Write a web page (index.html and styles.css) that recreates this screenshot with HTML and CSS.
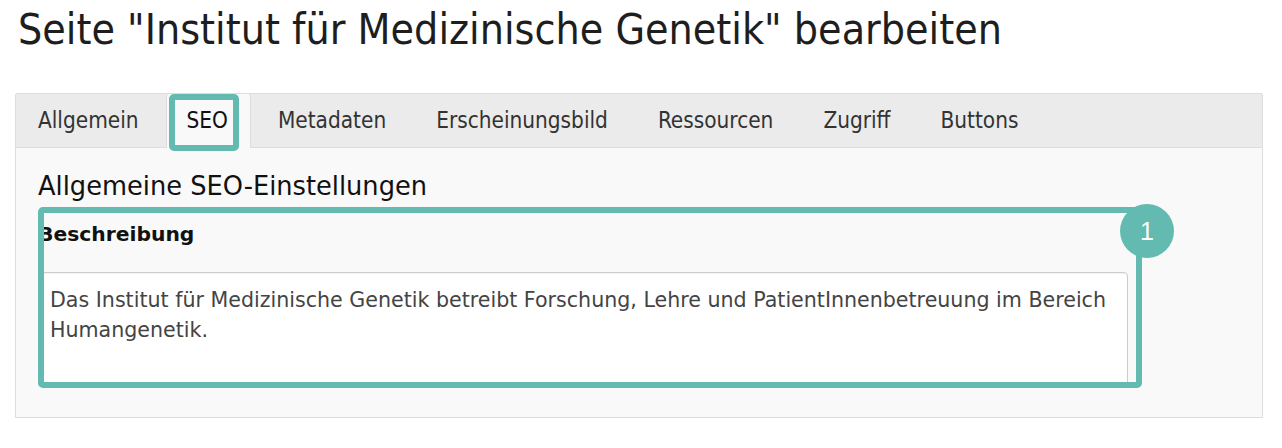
FILE: index.html
```html
<!DOCTYPE html>
<html lang="de">
<head>
    <meta charset="UTF-8">
    <title>Seite bearbeiten</title>
    <link rel="stylesheet" href="styles.css">
</head>
<body>
    <h1 class="page-title">Seite "Institut für Medizinische Genetik" bearbeiten</h1>

    <div class="tabs">
        <div class="tab-bar">
            <div class="tab">Allgemein</div>
            <div class="tab active">SEO<span class="mark mark-tab"></span></div>
            <div class="tab">Metadaten</div>
            <div class="tab">Erscheinungsbild</div>
            <div class="tab">Ressourcen</div>
            <div class="tab">Zugriff</div>
            <div class="tab">Buttons</div>
        </div>

        <div class="tab-panel">
            <h2>Allgemeine SEO-Einstellungen</h2>
            <div class="field">
                <label for="description">Beschreibung</label>
                <textarea id="description" readonly>Das Institut für Medizinische Genetik betreibt Forschung, Lehre und PatientInnenbetreuung im Bereich Humangenetik.</textarea>
                <span class="mark mark-field"></span>
                <span class="badge">1</span>
            </div>
        </div>
    </div>
</body>
</html>
```

FILE: styles.css
```css
body {
    margin: 0;
    font-family: 'DejaVu Sans', sans-serif;
    color: #222;
    background: #ffffff;
}

.page-title {
    font-family: 'DejaVu Sans Condensed', 'DejaVu Sans', sans-serif;
    font-stretch: condensed;
    font-weight: normal;
    font-size: 42.5px;
    line-height: 50px;
    margin: 5px 0 38px 18px;
    color: #1e1e1e;
}

.tabs {
    margin: 0 19px 0 15px;
}

.tab-bar {
    display: flex;
    align-items: flex-end;
    background: #ebebeb;
    border: 1px solid #dddddd;
    border-radius: 2px 2px 0 0;
}

.tab {
    position: relative;
    font-family: 'DejaVu Sans Condensed', 'DejaVu Sans', sans-serif;
    font-stretch: condensed;
    font-size: 22.4px;
    line-height: 22px;
    color: #333;
    padding: 15px 22px 16px;
    margin-right: 4px;
    border: 1px solid transparent;
    border-bottom: none;
    margin-top: -1px;
}

.tab:first-child {
    padding-left: 21px;
}

.tab.active {
    background: #f9f9f9;
    border-color: #dddddd;
    border-radius: 3px 3px 0 0;
    color: #111;
    margin-bottom: -1px;
    padding: 15px 22px 17px 20px;
}

.tab-panel {
    background: #f9f9f9;
    border: 1px solid #dddddd;
    border-top: none;
    padding: 24px 22px 30px;
}

.tab-panel h2 {
    font-weight: normal;
    font-size: 25.7px;
    line-height: 28px;
    margin: 0 0 22px;
    color: #111;
}

.field {
    position: relative;
    width: 1090px;
}

.field label {
    display: block;
    font-weight: bold;
    font-size: 20.3px;
    line-height: 24px;
    color: #111;
    margin-bottom: 26px;
}

.field textarea {
    display: block;
    box-sizing: border-box;
    width: 1090px;
    height: 115px;
    padding: 12px 11px;
    border: 1px solid #cccccc;
    border-radius: 4px;
    background: #ffffff;
    font-family: 'DejaVu Sans', sans-serif;
    font-size: 20.6px;
    line-height: 30px;
    color: #444;
    resize: none;
    overflow: hidden;
    box-shadow: inset 0 1px 1px rgba(0, 0, 0, 0.05);
}

/* annotation overlays */
.mark {
    position: absolute;
    border: 6px solid #62bab0;
    border-radius: 5px;
    box-sizing: border-box;
}

.mark-tab {
    left: 2px;
    top: 0;
    width: 70px;
    height: 57px;
}

.mark-field {
    left: 0;
    top: -15px;
    width: 1104px;
    height: 181px;
}

.badge {
    position: absolute;
    left: 1082px;
    top: -18px;
    width: 54px;
    height: 54px;
    border-radius: 50%;
    background: #62bab0;
    color: #ffffff;
    font-family: 'Liberation Sans', sans-serif;
    font-size: 25px;
    line-height: 54px;
    text-align: center;
}
```
